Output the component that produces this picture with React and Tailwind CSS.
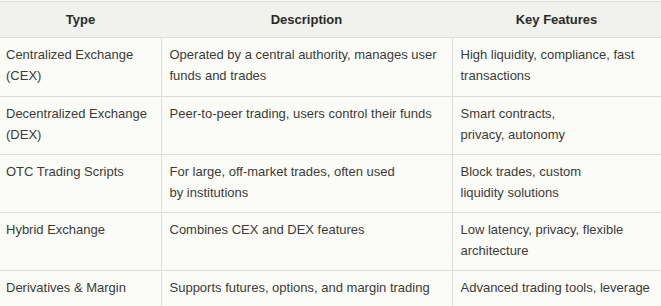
export default function App() {
  const rows = [
    ["Centralized Exchange (CEX)", "Operated by a central authority, manages user funds and trades", "High liquidity, compliance, fast transactions"],
    ["Decentralized Exchange (DEX)", "Peer-to-peer trading, users control their funds", "Smart contracts,\nprivacy, autonomy"],
    ["OTC Trading Scripts", "For large, off-market trades, often used\nby institutions", "Block trades, custom\nliquidity solutions"],
    ["Hybrid Exchange", "Combines CEX and DEX features", "Low latency, privacy, flexible architecture"],
    ["Derivatives & Margin", "Supports futures, options, and margin trading", "Advanced trading tools, leverage"],
  ];
  return (
    <div className="w-[661px] h-[306px] overflow-hidden bg-[#fbfbf8] font-['Liberation_Sans',Arial,sans-serif] text-[13px] leading-[21px] text-[#3b3b38]">
      <table className="w-[661px] table-fixed border-collapse mt-px">
        <colgroup>
          <col className="w-[161px]" />
          <col className="w-[291px]" />
          <col className="w-[209px]" />
        </colgroup>
        <thead>
          <tr className="bg-[#f1f1ed] border-t border-b border-[#deded8] h-[36px]">
            <th className="font-bold text-center text-[#2a2a28] px-2">Type</th>
            <th className="font-bold text-center text-[#2a2a28] px-2">Description</th>
            <th className="font-bold text-center text-[#2a2a28] px-2">Key Features</th>
          </tr>
        </thead>
        <tbody>
          {rows.map((r, i) => (
            <tr key={i} className={`border-b border-[#deded8] ${i === 0 ? "h-[59px]" : "h-[58px]"}`}>
              {r.map((c, j) => (
                <td
                  key={j}
                  className={`align-top pt-[6px] pb-[9px] pl-[6px] pr-2 whitespace-pre-line ${j > 0 ? "border-l border-[#deded8] pl-[8px]" : ""}`}
                >
                  {c}
                </td>
              ))}
            </tr>
          ))}
        </tbody>
      </table>
    </div>
  );
}
